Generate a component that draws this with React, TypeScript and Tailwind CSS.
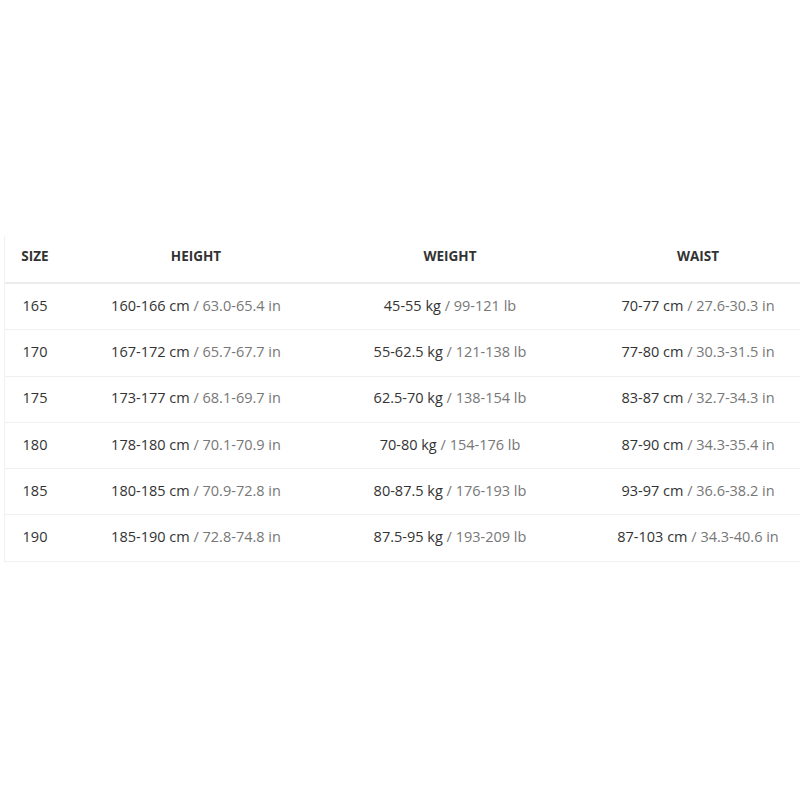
const rows = [
  { size: '165', h: ['160-166 cm', '63.0-65.4 in'], w: ['45-55 kg', '99-121 lb'], ws: ['70-77 cm', '27.6-30.3 in'] },
  { size: '170', h: ['167-172 cm', '65.7-67.7 in'], w: ['55-62.5 kg', '121-138 lb'], ws: ['77-80 cm', '30.3-31.5 in'] },
  { size: '175', h: ['173-177 cm', '68.1-69.7 in'], w: ['62.5-70 kg', '138-154 lb'], ws: ['83-87 cm', '32.7-34.3 in'] },
  { size: '180', h: ['178-180 cm', '70.1-70.9 in'], w: ['70-80 kg', '154-176 lb'], ws: ['87-90 cm', '34.3-35.4 in'] },
  { size: '185', h: ['180-185 cm', '70.9-72.8 in'], w: ['80-87.5 kg', '176-193 lb'], ws: ['93-97 cm', '36.6-38.2 in'] },
  { size: '190', h: ['185-190 cm', '72.8-74.8 in'], w: ['87.5-95 kg', '193-209 lb'], ws: ['87-103 cm', '34.3-40.6 in'] },
];

function Pair({ v }: { v: string[] }) {
  return (
    <span>
      {v[0]} <span className="text-[#777]">/ {v[1]}</span>
    </span>
  );
}

export default function App() {
  return (
    <div className="w-[800px] h-[800px] overflow-hidden bg-white pt-[236px] pl-[4px] font-['Open_Sans',sans-serif] text-[14.5px] text-[#333]">
      <div className="w-[818px] border-l border-[#f0f0f0]">
        <div className="grid grid-cols-[60px_262px_246px_250px] h-[48px] pb-[6px] items-center border-b-2 border-[#ececec] font-bold text-[13.5px] text-[#333]">
          <div className="text-center">SIZE</div>
          <div className="text-center">HEIGHT</div>
          <div className="text-center">WEIGHT</div>
          <div className="text-center">WAIST</div>
        </div>
        {rows.map((r) => (
          <div key={r.size} className="grid grid-cols-[60px_262px_246px_250px] h-[46.3px] pb-[2px] items-center border-b border-[#f0f0f0]">
            <div className="text-center">{r.size}</div>
            <div className="text-center"><Pair v={r.h} /></div>
            <div className="text-center"><Pair v={r.w} /></div>
            <div className="text-center"><Pair v={r.ws} /></div>
          </div>
        ))}
      </div>
    </div>
  );
}
